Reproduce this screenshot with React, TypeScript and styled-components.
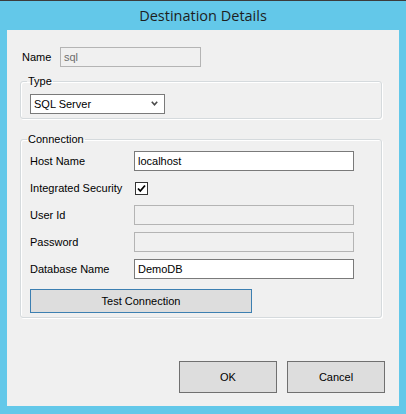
import { FC } from "react";
import styled, { createGlobalStyle } from "styled-components";

const GlobalStyle = createGlobalStyle`
  html, body {
    margin: 0;
    padding: 0;
    background: #63c8e9;
  }
  * {
    box-sizing: border-box;
  }
`;

const Window = styled.div`
  width: 406px;
  height: 414px;
  background: #63c8e9;
  border-top: 1px solid #3c3c3c;
  display: flex;
  flex-direction: column;
  font-family: "Liberation Sans", Arial, sans-serif;
  font-size: 11px;
  color: #000;
`;

const TitleBar = styled.div`
  height: 29px;
  display: flex;
  align-items: center;
  justify-content: center;
  font-family: "Open Sans", "Noto Sans", sans-serif;
  font-size: 14.5px;
  color: #1e1e1e;
  padding-bottom: 1px;
`;

const Client = styled.div`
  flex: 1;
  margin: 0 7px 8px 7px;
  background: #f0f0f0;
  display: flex;
  flex-direction: column;
  padding: 17px 14px 13px 13px;
`;

const NameRow = styled.div`
  display: flex;
  align-items: center;
  height: 20px;
  padding-left: 2px;
`;

const NameLabel = styled.span`
  width: 38px;
`;

const TextBox = styled.div<{ $disabled?: boolean; $width: number }>`
  width: ${(p) => p.$width}px;
  height: 20px;
  border: 1px solid ${(p) => (p.$disabled ? "#b4b4b4" : "#7a7a7a")};
  background: ${(p) => (p.$disabled ? "#f0f0f0" : "#fff")};
  color: ${(p) => (p.$disabled ? "#6d6d6d" : "#000")};
  display: flex;
  align-items: center;
  padding-left: 3px;
  padding-bottom: 1px;
`;

const Group = styled.fieldset<{ $top: number }>`
  margin: ${(p) => p.$top}px 3px 0 0;
  padding: 0 9px 4px 9px;
  border: 1px solid #d5dadd;
  border-radius: 3px;
  box-shadow: inset 1px 1px 0 #fff, 1px 1px 0 #fff;
  min-width: 0;
`;

const Legend = styled.legend`
  margin-left: -3px;
  padding: 0 1px;
  line-height: 13px;
  font-size: 11px;
`;

const Select = styled.div`
  margin-top: 6px;
  width: 135px;
  height: 20px;
  border: 1px solid #7a7a7a;
  background: #fff;
  display: flex;
  align-items: center;
  justify-content: space-between;
  padding: 0 6px 1px 3px;
`;

const Rows = styled.div`
  margin-top: 5px;
  display: flex;
  flex-direction: column;
  gap: 7px;
`;

const Row = styled.div`
  display: flex;
  align-items: center;
  height: 20px;
`;

const RowLabel = styled.span`
  width: 104px;
`;

const CheckBox = styled.span`
  width: 13px;
  height: 13px;
  margin-left: 1px;
  border: 1px solid #333;
  background: #fff;
  display: flex;
  align-items: center;
  justify-content: center;
`;

const Button = styled.div<{ $width: number; $height: number; $focused?: boolean }>`
  width: ${(p) => p.$width}px;
  height: ${(p) => p.$height}px;
  border: 1px solid ${(p) => (p.$focused ? "#3c7fb1" : "#707070")};
  background: #dddddd;
  display: flex;
  align-items: center;
  justify-content: center;
  padding-bottom: 1px;
`;

const TestRow = styled.div`
  margin-top: 10px;
`;

const Footer = styled.div`
  margin-top: auto;
  display: flex;
  justify-content: flex-end;
  gap: 10px;
`;

const Chevron: FC = () => (
  <svg width="7" height="5" viewBox="0 0 7 5">
    <path d="M0.8 0.8 L3.5 3.8 L6.2 0.8" fill="none" stroke="#4a4a4a" strokeWidth="1.6" />
  </svg>
);

const Tick: FC = () => (
  <svg width="9" height="9" viewBox="0 0 9 9">
    <path d="M1 4.5 L3.3 7 L8 1.5" fill="none" stroke="#000" strokeWidth="1.8" />
  </svg>
);

const fields = [
  { label: "Host Name", value: "localhost", disabled: false },
  { label: "User Id", value: "", disabled: true },
  { label: "Password", value: "", disabled: true },
  { label: "Database Name", value: "DemoDB", disabled: false },
];

const App: FC = () => {
  return (
    <>
      <GlobalStyle />
      <Window>
        <TitleBar>Destination Details</TitleBar>
        <Client>
          <NameRow>
            <NameLabel>Name</NameLabel>
            <TextBox $disabled $width={141}>sql</TextBox>
          </NameRow>

          <Group $top={8}>
            <Legend>Type</Legend>
            <Select>
              <span>SQL Server</span>
              <Chevron />
            </Select>
          </Group>

          <Group $top={14}>
            <Legend>Connection</Legend>
            <Rows>
              <Row>
                <RowLabel>{fields[0].label}</RowLabel>
                <TextBox $width={220}>{fields[0].value}</TextBox>
              </Row>
              <Row>
                <RowLabel>Integrated Security</RowLabel>
                <CheckBox>
                  <Tick />
                </CheckBox>
              </Row>
              {fields.slice(1).map((f) => (
                <Row key={f.label}>
                  <RowLabel>{f.label}</RowLabel>
                  <TextBox $width={220} $disabled={f.disabled}>
                    {f.value}
                  </TextBox>
                </Row>
              ))}
            </Rows>
            <TestRow>
              <Button $width={222} $height={24} $focused>
                Test Connection
              </Button>
            </TestRow>
          </Group>

          <Footer>
            <Button $width={98} $height={32}>OK</Button>
            <Button $width={98} $height={32}>Cancel</Button>
          </Footer>
        </Client>
      </Window>
    </>
  );
};

export default App;
